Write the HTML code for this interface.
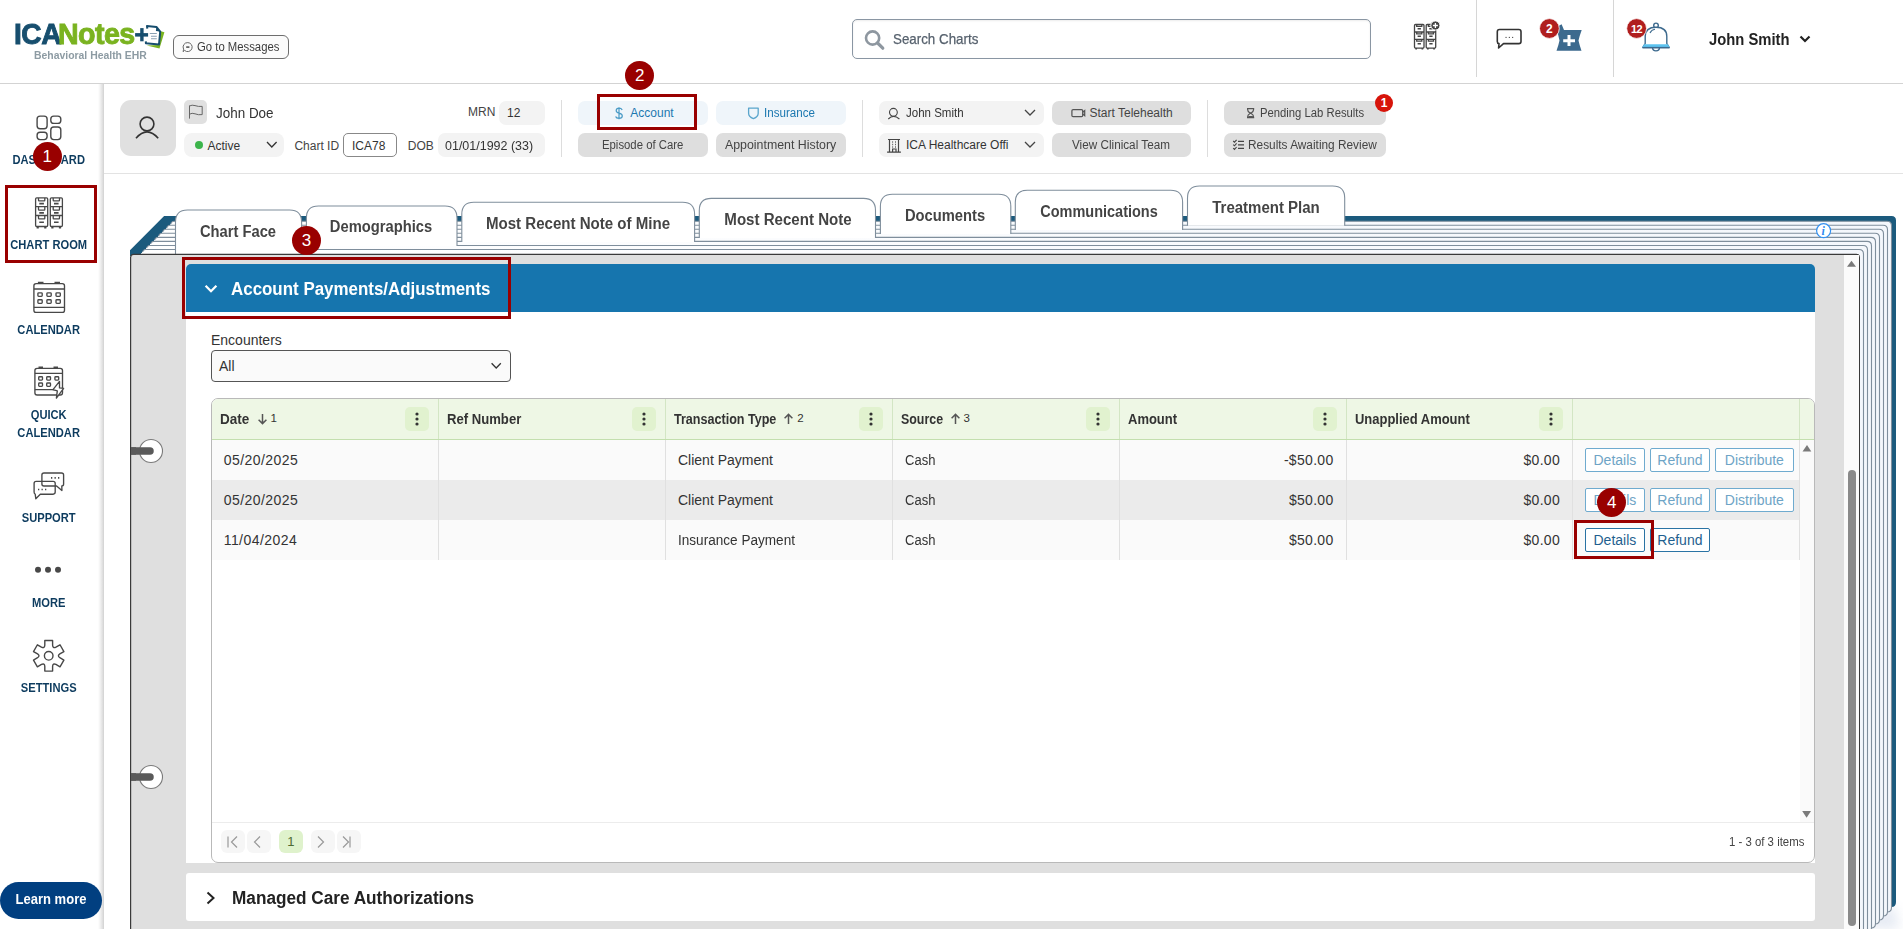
<!DOCTYPE html>
<html><head><meta charset="utf-8">
<style>
*{box-sizing:border-box}
html,body{margin:0;padding:0}
body{width:1903px;height:929px;overflow:hidden;position:relative;background:#fff;font-family:"Liberation Sans",sans-serif;color:#333}
.a{position:absolute}
.t{position:absolute;white-space:nowrap;line-height:1}
.badge{position:absolute;width:29.3px;height:29.3px;border-radius:50%;background:#990000;color:#fff;font-size:17px;text-align:center;line-height:30px}
.rbox{position:absolute;border:3px solid #990000}
.nav{position:absolute;left:0;width:97.4px;text-align:center;color:#0d3b5e;font-weight:bold;font-size:12px;line-height:18px;transform:scaleX(0.93);transform-origin:48.7px 0}
.pill{position:absolute;height:24px;border-radius:6px;font-size:12px;line-height:24px;text-align:center;color:#444;white-space:nowrap}
.tab{position:absolute;white-space:nowrap;line-height:1;font-size:16px;font-weight:bold;color:#444;text-align:center;transform:scaleX(0.92)}
.gbtn{position:absolute;height:24px;border:1px solid #5a9fc4;border-radius:2px;color:#5b9bbf;font-size:14px;line-height:22px;text-align:center;background:#fff}
</style></head>
<body>
<!-- HEADER -->
<div class="a" style="left:0;top:0;width:1903px;height:84px;border-bottom:1px solid #d3d3d3"></div>
<div class="t" style="left:13.6px;top:19.3px;font-size:29.5px;font-weight:bold;color:#174e6e;-webkit-text-stroke:0.9px #174e6e;transform:scaleX(0.955);transform-origin:0 0;letter-spacing:-0.5px">ICA</div>
<div class="t" style="left:57.9px;top:19.3px;font-size:29.5px;font-weight:bold;color:#7ab320;-webkit-text-stroke:0.9px #7ab320;transform:scaleX(0.97);transform-origin:0 0;letter-spacing:-0.6px">Notes</div>
<svg class="a" style="left:130px;top:20px" width="40" height="32">
<path d="M30,11 L34.4,12.3 L29.5,28.6 L16.7,25.4 L29,25 Z" fill="#7ab320"/>
<path d="M5.1,14.85 H18.1" stroke="#174e6e" stroke-width="3.5"/><path d="M11.9,8.1 V21.3" stroke="#174e6e" stroke-width="3.4"/>
<path d="M17.3,8.6 L17,6.1 L26.4,6.9 L30.2,11.6 L29,24.5 L15.9,23.2 L15.8,21.4" fill="none" stroke="#174e6e" stroke-width="2" stroke-linejoin="round"/>
<path d="M26.4,6.9 L25.9,10.9 L30.2,11.6 Z" fill="#174e6e"/>
<path d="M19.8,13.5 H26.8 M21,16.3 H26.8 M21,18.7 H26.8" stroke="#8aa0b3" stroke-width="1.1"/>
</svg>
<div class="t" style="left:34.4px;top:49.8px;font-size:10.6px;font-weight:bold;color:#8d9ba3;transform:scaleX(0.983);transform-origin:0 0">Behavioral Health EHR</div>
<div class="a" style="left:173px;top:35px;width:115.5px;height:24px;border:1.3px solid #6e6e6e;border-radius:6px;background:#fbfbfb"></div>
<div class="t" style="left:196.8px;top:40.8px;font-size:12px;color:#3c3c3c;transform:scaleX(0.943);transform-origin:0 0">Go to Messages</div>

<div class="a" style="left:852px;top:19px;width:519px;height:40px;border:1.5px solid #8a96a3;border-radius:5px;box-shadow:inset 0 1px 2px rgba(0,0,0,.08)"></div>
<div class="t" style="left:893px;top:31.3px;font-size:15px;color:#56616d;-webkit-text-stroke:0.25px #56616d;transform:scaleX(0.89);transform-origin:0 0">Search Charts</div>

<div class="a" style="left:1476px;top:0;width:1px;height:77px;background:#d6d6d6"></div>
<div class="a" style="left:1613px;top:0;width:1px;height:77px;background:#d6d6d6"></div>
<div class="t" style="left:1709.4px;top:31.1px;font-size:17px;font-weight:bold;color:#222;transform:scaleX(0.87);transform-origin:0 0">John Smith</div>
<svg class="a" style="left:1798px;top:33px" width="14" height="12"><path d="M2.5,3.5 L7,8 L11.5,3.5" fill="none" stroke="#222" stroke-width="2.2"/></svg>
<!-- search icon -->
<svg class="a" style="left:860px;top:26px" width="30" height="28"><circle cx="12.6" cy="12" r="6.6" fill="none" stroke="#8e97a0" stroke-width="2.6"/><path d="M17.6,17 L22.8,22.2" stroke="#8e97a0" stroke-width="3.2" stroke-linecap="round"/></svg>
<!-- go to messages icon -->
<svg class="a" style="left:181px;top:41px" width="13" height="13"><path d="M6.8,1.6 A4.5,4.5 0 1 1 3.6,9.4 L2.1,10.7 L2.6,8.2 A4.5,4.5 0 0 1 6.8,1.6 Z" fill="none" stroke="#666" stroke-width="1"/><path d="M5.2,6.1 H8.4" stroke="#555" stroke-width="1.6"/></svg>
<!-- cabinet plus icon -->
<svg class="a" style="left:1410px;top:18px" width="32" height="34" fill="none" stroke="#444" stroke-width="1.3">
<g><rect x="4.5" y="6.5" width="9.5" height="23.6" rx="1"/><path d="M4.5,14 H14 M4.5,21.3 H14"/>
<path d="M6.7,6.6 V8.3 H11.8 V6.6 M6.7,14.1 V15.8 H11.8 V14.1 M6.7,21.4 V23.1 H11.8 V21.4"/>
<path d="M7.6,10.8 H10.9 M7.6,18.2 H10.9 M7.6,25.7 H10.9" stroke-width="1.4"/>
<path d="M5.3,30.8 H7 M11.5,30.8 H13.2" stroke-width="1.6"/></g>
<g transform="translate(11.7,0)"><rect x="4.5" y="6.5" width="9.5" height="23.6" rx="1"/><path d="M4.5,14 H14 M4.5,21.3 H14"/>
<path d="M6.7,6.6 V8.3 H11.8 V6.6 M6.7,14.1 V15.8 H11.8 V14.1 M6.7,21.4 V23.1 H11.8 V21.4"/>
<path d="M7.6,10.8 H10.9 M7.6,18.2 H10.9 M7.6,25.7 H10.9" stroke-width="1.4"/>
<path d="M5.3,30.8 H7 M11.5,30.8 H13.2" stroke-width="1.6"/></g>
<circle cx="25.4" cy="7.5" r="4.6" fill="#444" stroke="#fff" stroke-width="1"/><path d="M25.4,5 V10 M22.9,7.5 H27.9" stroke="#fff" stroke-width="1.3"/></svg>
<!-- chat bubble -->
<svg class="a" style="left:1492px;top:24px" width="34" height="28"><path d="M7.5,5.5 H26.8 Q29,5.5 29,7.7 V17.4 Q29,19.6 26.8,19.6 H11.5 L6.6,24 L7,19.6 Q5.3,19.4 5.3,17.4 V7.7 Q5.3,5.5 7.5,5.5 Z" fill="none" stroke="#333" stroke-width="1.6" stroke-linejoin="round"/><path d="M13.5,13.4 H14.6 M16.8,13.4 H17.9 M20.1,13.4 H21.2" stroke="#333" stroke-width="1"/></svg>
<!-- rx mortar -->
<svg class="a" style="left:1536px;top:16px" width="54" height="40">
<path d="M22.5,10 L25.6,8.2 L28,14 L45.7,14 Q43.5,20 42.5,24.6 Q43.5,29.5 45.5,34.7 L20.5,34.7 Q22.5,29.5 23.5,24.6 Q22.5,20 21,14 Z" fill="#3d6a8e"/>
<path d="M33,19 V30 M27.2,24.7 H39" stroke="#fff" stroke-width="3"/>
<circle cx="13.4" cy="12.5" r="9.9" fill="#b01e1e" stroke="#fff" stroke-width="0.8"/>
<text x="13.4" y="16.8" text-anchor="middle" font-family="Liberation Sans" font-weight="bold" font-size="12" fill="#fff">2</text></svg>
<!-- bell -->
<svg class="a" style="left:1624px;top:16px" width="50" height="40">
<circle cx="32" cy="9.4" r="2.3" fill="none" stroke="#3d6a8e" stroke-width="1.4"/>
<path d="M21.2,27.5 V20.5 Q21.2,11.3 32,11.3 Q42.8,11.3 42.8,20.5 V27.5 L45.3,31.6 H18.7 Z" fill="#fff" stroke="#3d6a8e" stroke-width="1.4" stroke-linejoin="round"/>
<path d="M20,28.2 H44 L45.8,31.4 H18.2 Z" fill="#5cc3ef"/>
<path d="M18.7,31.6 H45.3" stroke="#3d6a8e" stroke-width="1.4"/>
<path d="M28.6,31.8 Q28.6,34.9 32,34.9 Q35.4,34.9 35.4,31.8" fill="none" stroke="#3d6a8e" stroke-width="1.4"/>
<path d="M26,17 Q27.5,13.8 31,13.3" fill="none" stroke="#3d6a8e" stroke-width="1.1"/>
<circle cx="12.6" cy="12.5" r="9.9" fill="#b01e1e" stroke="#fff" stroke-width="0.8"/>
<text x="12.6" y="16.6" text-anchor="middle" font-family="Liberation Sans" font-weight="bold" font-size="11" fill="#fff" letter-spacing="-0.6">12</text></svg>


<!-- SIDEBAR -->
<div class="a" style="left:98px;top:84px;width:6px;height:845px;background:linear-gradient(90deg,rgba(0,0,0,0),rgba(0,0,0,0.05) 35%,rgba(0,0,0,0.13) 78%,rgba(0,0,0,0.18))"></div>
<div class="nav" style="top:150.7px">DASHBOARD</div>
<div class="nav" style="top:235.7px">CHART ROOM</div>
<div class="nav" style="top:320.7px">CALENDAR</div>
<div class="nav" style="top:405.7px">QUICK<br>CALENDAR</div>
<div class="nav" style="top:508.7px">SUPPORT</div>
<div class="nav" style="top:593.7px">MORE</div>
<div class="nav" style="top:678.7px">SETTINGS</div>
<div class="a" style="left:0;top:882px;width:102px;height:37px;border-radius:19px;background:#013f80"></div><div class="t" style="left:0;top:892.2px;width:102px;text-align:center;font-size:14px;font-weight:bold;color:#fff;transform:scaleX(0.93);transform-origin:51px 0">Learn more</div>

<svg class="a" style="left:0;top:0" width="1903" height="929" viewBox="0 0 1903 929">
<defs><linearGradient id="pg" x1="0" y1="0" x2="1" y2="0"><stop offset="0" stop-color="#ffffff"/><stop offset="1" stop-color="#f4f7fc"/></linearGradient></defs>
<defs><filter id="bl" x="-50%" y="-50%" width="200%" height="200%"><feGaussianBlur stdDeviation="6"/></filter></defs>
<path d="M1830,929 L1893,905 L1900,929 Z" fill="#c9d3e6" opacity="0.45" filter="url(#bl)"/>
<path d="M130,256 L130,250.3 L164.1,216 L1891.5,216 Q1896,216 1896,220.5 L1896,902 Q1896,907 1891.5,907 L1860,907 L1860,256 Z" fill="#1b5a7d"/>
<path d="M139.1,256 L169.8,225.3 L171.5,222.5 Q172.2,221.2 174,221.2 L1887,221.2 Q1891.5,221.2 1891.5,225.7 L1891.5,907.5 Q1891.5,912 1887,912 L1811.5,912 L1811.5,256 Z" fill="url(#pg)"/>
<path d="M170.8,223.6 L171.5,222.5 Q172.2,221.2 174,221.2 L1887,221.2 Q1891.5,221.2 1891.5,225.7 L1891.5,907.5 Q1891.5,912 1887,912 L1811.5,912" fill="none" stroke="#7f8e9c" stroke-width="1.1"/>
<path d="M139.1,256 L165.76,229.34 L167.46,226.54 Q168.16,225.24 169.96,225.24 L1883,225.24 Q1887.5,225.24 1887.5,229.74 L1887.5,911.5 Q1887.5,916 1883,916 L1807.5,916 L1807.5,256 Z" fill="url(#pg)"/>
<path d="M166.76,227.64 L167.46,226.54 Q168.16,225.24 169.96,225.24 L1883,225.24 Q1887.5,225.24 1887.5,229.74 L1887.5,911.5 Q1887.5,916 1883,916 L1807.5,916" fill="none" stroke="#7f8e9c" stroke-width="1.1"/>
<path d="M1187.5,225.84 L1187.5,198 Q1187.5,186 1199.5,186 L1332.7,186 Q1344.7,186 1344.7,198 L1344.7,225.84 Z" fill="#fff"/>
<path d="M1187.5,225.84 L1187.5,198 Q1187.5,186 1199.5,186 L1332.7,186 Q1344.7,186 1344.7,198 L1344.7,225.84" fill="none" stroke="#7f8e9c" stroke-width="1.1"/>
<path d="M139.1,256 L161.72,233.38 L163.42,230.58 Q164.12,229.28 165.92,229.28 L1879,229.28 Q1883.5,229.28 1883.5,233.78 L1883.5,915.5 Q1883.5,920 1879,920 L1803.5,920 L1803.5,256 Z" fill="url(#pg)"/>
<path d="M162.72,231.68 L163.42,230.58 Q164.12,229.28 165.92,229.28 L1879,229.28 Q1883.5,229.28 1883.5,233.78 L1883.5,915.5 Q1883.5,920 1879,920 L1803.5,920" fill="none" stroke="#7f8e9c" stroke-width="1.1"/>
<path d="M1015.3,229.88 L1015.3,202.2 Q1015.3,190.2 1027.3,190.2 L1170.6,190.2 Q1182.6,190.2 1182.6,202.2 L1182.6,229.88 Z" fill="#fff"/>
<path d="M1015.3,229.88 L1015.3,202.2 Q1015.3,190.2 1027.3,190.2 L1170.6,190.2 Q1182.6,190.2 1182.6,202.2 L1182.6,229.88" fill="none" stroke="#7f8e9c" stroke-width="1.1"/>
<path d="M139.1,256 L157.68,237.42 L159.38,234.62 Q160.08,233.32 161.88,233.32 L1875,233.32 Q1879.5,233.32 1879.5,237.82 L1879.5,919.5 Q1879.5,924 1875,924 L1799.5,924 L1799.5,256 Z" fill="url(#pg)"/>
<path d="M158.68,235.72 L159.38,234.62 Q160.08,233.32 161.88,233.32 L1875,233.32 Q1879.5,233.32 1879.5,237.82 L1879.5,919.5 Q1879.5,924 1875,924 L1799.5,924" fill="none" stroke="#7f8e9c" stroke-width="1.1"/>
<path d="M880.4,233.92 L880.4,206.2 Q880.4,194.2 892.4,194.2 L998.8,194.2 Q1010.8,194.2 1010.8,206.2 L1010.8,233.92 Z" fill="#fff"/>
<path d="M880.4,233.92 L880.4,206.2 Q880.4,194.2 892.4,194.2 L998.8,194.2 Q1010.8,194.2 1010.8,206.2 L1010.8,233.92" fill="none" stroke="#7f8e9c" stroke-width="1.1"/>
<path d="M139.1,256 L153.64,241.46 L155.34,238.66 Q156.04,237.36 157.84,237.36 L1871,237.36 Q1875.5,237.36 1875.5,241.86 L1875.5,923.5 Q1875.5,928 1871,928 L1795.5,928 L1795.5,256 Z" fill="url(#pg)"/>
<path d="M154.64,239.76 L155.34,238.66 Q156.04,237.36 157.84,237.36 L1871,237.36 Q1875.5,237.36 1875.5,241.86 L1875.5,923.5 Q1875.5,928 1871,928 L1795.5,928" fill="none" stroke="#7f8e9c" stroke-width="1.1"/>
<path d="M699.3,237.96 L699.3,210.4 Q699.3,198.4 711.3,198.4 L863.5,198.4 Q875.5,198.4 875.5,210.4 L875.5,237.96 Z" fill="#fff"/>
<path d="M699.3,237.96 L699.3,210.4 Q699.3,198.4 711.3,198.4 L863.5,198.4 Q875.5,198.4 875.5,210.4 L875.5,237.96" fill="none" stroke="#7f8e9c" stroke-width="1.1"/>
<path d="M139.1,256 L149.6,245.5 L151.3,242.7 Q152,241.4 153.8,241.4 L1867,241.4 Q1871.5,241.4 1871.5,245.9 L1871.5,927.5 Q1871.5,932 1867,932 L1791.5,932 L1791.5,256 Z" fill="url(#pg)"/>
<path d="M150.6,243.8 L151.3,242.7 Q152,241.4 153.8,241.4 L1867,241.4 Q1871.5,241.4 1871.5,245.9 L1871.5,927.5 Q1871.5,932 1867,932 L1791.5,932" fill="none" stroke="#7f8e9c" stroke-width="1.1"/>
<path d="M461.8,242 L461.8,214.3 Q461.8,202.3 473.8,202.3 L682.6,202.3 Q694.6,202.3 694.6,214.3 L694.6,242 Z" fill="#fff"/>
<path d="M461.8,242 L461.8,214.3 Q461.8,202.3 473.8,202.3 L682.6,202.3 Q694.6,202.3 694.6,214.3 L694.6,242" fill="none" stroke="#7f8e9c" stroke-width="1.1"/>
<path d="M139.1,256 L145.56,249.54 L147.26,246.74 Q147.96,245.44 149.76,245.44 L1863,245.44 Q1867.5,245.44 1867.5,249.94 L1867.5,931.5 Q1867.5,936 1863,936 L1787.5,936 L1787.5,256 Z" fill="url(#pg)"/>
<path d="M146.56,247.84 L147.26,246.74 Q147.96,245.44 149.76,245.44 L1863,245.44 Q1867.5,245.44 1867.5,249.94 L1867.5,931.5 Q1867.5,936 1863,936 L1787.5,936" fill="none" stroke="#7f8e9c" stroke-width="1.1"/>
<path d="M306.4,246.04 L306.4,218 Q306.4,206 318.4,206 L445,206 Q457,206 457,218 L457,246.04 Z" fill="#fff"/>
<path d="M306.4,246.04 L306.4,218 Q306.4,206 318.4,206 L445,206 Q457,206 457,218 L457,246.04" fill="none" stroke="#7f8e9c" stroke-width="1.1"/>
<path d="M139.1,256 L141.52,253.58 L143.22,250.78 Q143.92,249.48 145.72,249.48 L1859,249.48 Q1863.5,249.48 1863.5,253.98 L1863.5,935.5 Q1863.5,940 1859,940 L1783.5,940 L1783.5,256 Z" fill="url(#pg)"/>
<path d="M142.52,251.88 L143.22,250.78 Q143.92,249.48 145.72,249.48 L1859,249.48 Q1863.5,249.48 1863.5,253.98 L1863.5,935.5 Q1863.5,940 1859,940 L1783.5,940" fill="none" stroke="#7f8e9c" stroke-width="1.1"/>
<path d="M175.5,255 L175.5,222 Q175.5,210 187.5,210 L289.6,210 Q301.6,210 301.6,222 L301.6,255 Z" fill="#fff"/>
<path d="M175.5,255 L175.5,222 Q175.5,210 187.5,210 L289.6,210 Q301.6,210 301.6,222 L301.6,255" fill="none" stroke="#7f8e9c" stroke-width="1.1"/>
<path d="M130.6,929.5 L130.6,257.4 Q130.6,254.4 133.6,254.4 L1856.4,254.4 Q1859.4,254.4 1859.4,257.4 L1859.4,929.5" fill="#dfdfdf" stroke="#3a3a3a" stroke-width="1.2"/>
</svg>
<!-- PATIENT HEADER -->
<div class="a" style="left:104px;top:173px;width:1799px;height:1px;background:#e3e3e3"></div>
<div class="a" style="left:120px;top:100px;width:56px;height:56px;border-radius:11px;background:#e0e0e0"></div>
<div class="a" style="left:184px;top:100px;width:23px;height:24px;border-radius:5px;background:#e0e0e0"></div>
<div class="t" style="left:215.5px;top:106.3px;font-size:14px;color:#333;transform:scaleX(0.96);transform-origin:0 0">John Doe</div>
<div class="a" style="left:184px;top:133px;width:100px;height:24px;border-radius:8px;background:#f3f3f3"></div>
<div class="a" style="left:195px;top:141px;width:8px;height:8px;border-radius:50%;background:#3cb44b"></div>
<div class="t" style="left:207.5px;top:139.6px;font-size:12px;color:#333">Active</div>
<div class="t" style="left:294.4px;top:139.6px;font-size:12px;color:#444">Chart ID</div>
<div class="a" style="left:343px;top:133px;width:54px;height:24px;border-radius:5px;border:1px solid #888;background:#fff"></div>
<div class="t" style="left:352px;top:139.6px;font-size:12px;color:#333">ICA78</div>
<div class="t" style="left:407.8px;top:139.6px;font-size:12px;color:#444">DOB</div>
<div class="a" style="left:438px;top:133px;width:107px;height:24px;border-radius:7px;background:#f3f3f3"></div>
<div class="t" style="left:444.7px;top:139.6px;font-size:12px;color:#333;transform:scaleX(1.04);transform-origin:0 0">01/01/1992 (33)</div>
<div class="t" style="left:468px;top:106px;font-size:12px;color:#444">MRN</div>
<div class="a" style="left:499px;top:101px;width:46px;height:24px;border-radius:7px;background:#f3f3f3"></div>
<div class="t" style="left:507px;top:107px;font-size:12px;color:#333">12</div>

<div class="a" style="left:561px;top:100px;width:1px;height:57px;background:#ddd"></div>
<div class="a" style="left:862px;top:100px;width:1px;height:57px;background:#ddd"></div>
<div class="a" style="left:1207px;top:100px;width:1px;height:57px;background:#ddd"></div>

<div class="a" style="left:578px;top:101px;width:130px;height:24px;border-radius:7px;background:#eff5fa"></div>
<div class="a" style="left:716px;top:101px;width:130px;height:24px;border-radius:7px;background:#eff5fa"></div>
<div class="a" style="left:578px;top:133px;width:130px;height:24px;border-radius:7px;background:#dedede"></div>
<div class="a" style="left:716px;top:133px;width:130px;height:24px;border-radius:7px;background:#dedede"></div>
<div class="a" style="left:879px;top:101px;width:165px;height:24px;border-radius:7px;background:#f3f3f3"></div>
<div class="a" style="left:879px;top:133px;width:165px;height:24px;border-radius:7px;background:#f3f3f3"></div>
<div class="a" style="left:1052px;top:101px;width:139px;height:24px;border-radius:7px;background:#dedede"></div>
<div class="a" style="left:1052px;top:133px;width:139px;height:24px;border-radius:7px;background:#dedede"></div>
<div class="a" style="left:1224px;top:101px;width:162px;height:24px;border-radius:7px;background:#dedede"></div>
<div class="a" style="left:1224px;top:133px;width:162px;height:24px;border-radius:7px;background:#dedede"></div>
<div class="t" style="left:630.3px;top:107.1px;font-size:12px;color:#1c78b0">Account</div>
<div class="t" style="left:764.4px;top:107.1px;font-size:12px;color:#1c78b0;transform:scaleX(0.967);transform-origin:0 0">Insurance</div>
<div class="t" style="left:601.9px;top:139.1px;font-size:12px;color:#444;transform:scaleX(0.945);transform-origin:0 0">Episode of Care</div>
<div class="t" style="left:725.2px;top:139.1px;font-size:12px;color:#444;transform:scaleX(1.03);transform-origin:0 0">Appointment History</div>
<div class="t" style="left:906px;top:107.1px;font-size:12px;color:#333;transform:scaleX(0.96);transform-origin:0 0">John Smith</div>
<div class="t" style="left:906px;top:139.1px;font-size:12px;color:#333">ICA Healthcare Offi</div>
<div class="t" style="left:1089.5px;top:107.1px;font-size:12px;color:#444">Start Telehealth</div>
<div class="t" style="left:1072px;top:139.1px;font-size:12px;color:#444;transform:scaleX(0.977);transform-origin:0 0">View Clinical Team</div>
<div class="t" style="left:1260.2px;top:107.1px;font-size:12px;color:#444;transform:scaleX(0.94);transform-origin:0 0">Pending Lab Results</div>
<div class="t" style="left:1247.8px;top:139.1px;font-size:12px;color:#444;transform:scaleX(0.987);transform-origin:0 0">Results Awaiting Review</div>

<svg class="a" style="left:612px;top:105px" width="14" height="16"><path d="M10.2,5 Q9.3,3.2 7,3.2 Q4.2,3.2 4.2,5.6 Q4.2,7.6 7,8.2 Q10.3,8.9 10.3,11 Q10.3,13.3 7,13.3 Q4.2,13.3 3.6,11.5 M7,2.3 V14.2" fill="none" stroke="#4a9bc6" stroke-width="1.2"/></svg>
<svg class="a" style="left:746px;top:105px" width="15" height="16"><path d="M2.6,3.1 H12.2 V8.2 Q12.2,11.8 7.4,13.6 Q2.6,11.8 2.6,8.2 Z" fill="none" stroke="#5aa5cc" stroke-width="1.3" stroke-linejoin="round"/></svg>
<svg class="a" style="left:885px;top:105px" width="18" height="18" fill="none" stroke="#444" stroke-width="1.1"><circle cx="8.4" cy="7.3" r="3.9"/><path d="M3.3,14 Q8.4,8.8 14.4,14"/></svg>
<svg class="a" style="left:885px;top:137px" width="18" height="18" fill="none" stroke="#444" stroke-width="1.2"><path d="M3,2.5 H15 M4.5,2.5 V15.2 M13.5,2.5 V15.2 M2.1,15.2 H15.9 M7.6,15.2 V12 H11 V15.2"/><path d="M7.3,5 H8.1 M10,5 H10.8 M7.3,7.5 H8.1 M10,7.5 H10.8 M7.3,10 H8.1 M10,10 H10.8" stroke-width="1.4"/></svg>
<svg class="a" style="left:1022px;top:107px" width="16" height="12"><path d="M3,3 L8,8 L13,3" fill="none" stroke="#444" stroke-width="1.3"/></svg>
<svg class="a" style="left:1022px;top:139px" width="16" height="12"><path d="M3,3 L8,8 L13,3" fill="none" stroke="#444" stroke-width="1.3"/></svg>
<svg class="a" style="left:264px;top:139px" width="16" height="12"><path d="M3,3 L7.8,8 L12.6,3" fill="none" stroke="#333" stroke-width="1.3"/></svg>
<svg class="a" style="left:1069px;top:106px" width="19" height="14" fill="none" stroke="#555" stroke-width="1.25"><rect x="2.9" y="3.6" width="10.8" height="7" rx="1.2"/><path d="M13.7,6.3 L15.7,4.6 V9.7 L13.7,8"/></svg>
<svg class="a" style="left:1244px;top:106px" width="12" height="14" fill="none" stroke="#555" stroke-width="1.2"><path d="M3.6,2.6 H9.6 V3.4 Q9.6,5.4 7.2,6.9 L6.6,7.2 L6,6.9 Q3.6,5.4 3.6,3.4 Z M6.6,7.2 L7.2,7.6 Q9.6,9 9.6,11 V11.6 H3.6 V11 Q3.6,9 6,7.6 Z"/><path d="M4.3,10.8 H8.9" stroke-width="1.6"/></svg>
<svg class="a" style="left:1230px;top:137px" width="16" height="16" fill="none" stroke="#444" stroke-width="1.1"><path d="M3.2,4 L4.5,5.2 L6.6,2.8 M3.2,7.6 L4.5,8.8 L6.6,6.4 M3.2,11.2 L4.5,12.4 L6.6,10"/><path d="M8,4.3 H14 M8,7.9 H14 M8,11.4 H14" stroke-width="1.3"/></svg>
<svg class="a" style="left:1374px;top:93px" width="20" height="20"><circle cx="10" cy="10" r="9" fill="#d7140a"/><text x="10" y="14.2" text-anchor="middle" font-family="Liberation Sans" font-weight="bold" font-size="12" fill="#fff">1</text></svg>
<svg class="a" style="left:120px;top:100px" width="56" height="56" fill="none" stroke="#333" stroke-width="1.6"><circle cx="27" cy="24" r="6.9"/><path d="M16,38.2 Q27,25.5 38.2,38.2"/></svg>
<svg class="a" style="left:184px;top:100px" width="23" height="24" fill="none" stroke="#666" stroke-width="1"><path d="M5.5,5.5 V18.6"/><path d="M5.5,6 Q8,4.6 11,5.6 Q14.3,6.8 18.2,6.4 V14.6 Q14.3,15.2 11,13.8 Q8,12.6 5.5,14.2"/></svg>



<!-- TAB TEXT -->
<div class="tab" style="left:88.25px;top:223.8px;width:300px">Chart Face</div>
<div class="tab" style="left:231.15px;top:219.3px;width:300px">Demographics</div>
<div class="tab" style="left:427.70px;top:215.9px;width:300px;transform:scaleX(0.942)">Most Recent Note of Mine</div>
<div class="tab" style="left:637.65px;top:212.0px;width:300px;transform:scaleX(0.942)">Most Recent Note</div>
<div class="tab" style="left:795.35px;top:208.0px;width:300px">Documents</div>
<div class="tab" style="left:948.70px;top:204.1px;width:300px;transform:scaleX(0.905)">Communications</div>
<div class="tab" style="left:1115.70px;top:199.9px;width:300px;transform:scaleX(0.938)">Treatment Plan</div>

<!-- CONTENT -->
<div class="a" style="left:186px;top:263.8px;width:1629px;height:48px;background:#1675ae;border-radius:5px 5px 0 0"></div>
<div class="t" style="left:231px;top:279.9px;font-size:18px;font-weight:bold;color:#fff;transform:scaleX(0.94);transform-origin:0 0">Account Payments/Adjustments</div>
<div class="a" style="left:186px;top:311.6px;width:1629px;height:551.6px;background:#fff"></div>
<div class="t" style="left:211px;top:333.4px;font-size:14px;color:#333">Encounters</div>
<div class="a" style="left:211.4px;top:350.2px;width:299.6px;height:31.6px;border:1px solid #555;border-radius:4px;background:#fafafa"></div>
<div class="t" style="left:219px;top:359px;font-size:14px;color:#333">All</div>

<!-- GRID -->
<div class="a" style="left:211.4px;top:398.3px;width:1603.6px;height:464.5px;border:1px solid #b9b9b9;border-radius:7px;background:#fff"></div>
<div class="a" style="left:212.4px;top:399.3px;width:1601.6px;height:40.7px;background:#eef7e5;border-bottom:1px solid #c3dfae;border-radius:6px 6px 0 0"></div>
<div class="a" style="left:437.5px;top:399.3px;width:1px;height:40px;background:#d3e6c4"></div>
<div class="a" style="left:664.7px;top:399.3px;width:1px;height:40px;background:#d3e6c4"></div>
<div class="a" style="left:891.7px;top:399.3px;width:1px;height:40px;background:#d3e6c4"></div>
<div class="a" style="left:1118.5px;top:399.3px;width:1px;height:40px;background:#d3e6c4"></div>
<div class="a" style="left:1345.5px;top:399.3px;width:1px;height:40px;background:#d3e6c4"></div>
<div class="a" style="left:1571.7px;top:399.3px;width:1px;height:40px;background:#d3e6c4"></div>
<div class="a" style="left:1798.5px;top:399.3px;width:1px;height:40px;background:#d3e6c4"></div>
<div class="a" style="left:212.4px;top:439.8px;width:1586.6px;height:40px;background:#fafafa"></div>
<div class="a" style="left:212.4px;top:479.8px;width:1586.6px;height:40px;background:#ebebeb"></div>
<div class="a" style="left:212.4px;top:519.8px;width:1586.6px;height:40px;background:#fafafa"></div>
<div class="a" style="left:437.5px;top:440px;width:1px;height:120px;background:#e0e0e0"></div>
<div class="a" style="left:664.7px;top:440px;width:1px;height:120px;background:#e0e0e0"></div>
<div class="a" style="left:891.7px;top:440px;width:1px;height:120px;background:#e0e0e0"></div>
<div class="a" style="left:1118.5px;top:440px;width:1px;height:120px;background:#e0e0e0"></div>
<div class="a" style="left:1345.5px;top:440px;width:1px;height:120px;background:#e0e0e0"></div>
<div class="a" style="left:1571.7px;top:440px;width:1px;height:120px;background:#e0e0e0"></div>
<div class="a" style="left:1798.5px;top:440px;width:1px;height:120px;background:#e0e0e0"></div>
<div class="a" style="left:1799.5px;top:440px;width:14.5px;height:382px;background:#fafafa"></div>
<svg class="a" style="left:1800px;top:443px" width="14" height="10"><path d="M2.5,8.6 L7,2 L11.3,8.6 Z" fill="#7a7a7a"/></svg>
<svg class="a" style="left:1800px;top:809px" width="14" height="10"><path d="M2.2,2 L11,2 L6.6,8.7 Z" fill="#7a7a7a"/></svg>
<div class="a" style="left:212.4px;top:822px;width:1601.6px;height:1px;background:#ececec"></div>
<div class="t" style="left:220px;top:412.4px;font-size:14px;font-weight:bold;color:#333;transform:scaleX(0.964);transform-origin:0 0">Date</div>
<div class="t" style="left:447px;top:412.4px;font-size:14px;font-weight:bold;color:#333;transform:scaleX(0.936);transform-origin:0 0">Ref Number</div>
<div class="t" style="left:674.2px;top:412.4px;font-size:14px;font-weight:bold;color:#333;transform:scaleX(0.897);transform-origin:0 0">Transaction Type</div>
<div class="t" style="left:900.6px;top:412.4px;font-size:14px;font-weight:bold;color:#333;transform:scaleX(0.886);transform-origin:0 0">Source</div>
<div class="t" style="left:1127.5px;top:412.4px;font-size:14px;font-weight:bold;color:#333;transform:scaleX(0.928);transform-origin:0 0">Amount</div>
<div class="t" style="left:1354.5px;top:412.4px;font-size:14px;font-weight:bold;color:#333;transform:scaleX(0.926);transform-origin:0 0">Unapplied Amount</div>
<svg class="a" style="left:257.5px;top:413px" width="10" height="13"><path d="M4.5,1 L4.5,10.6 M0.6,6.8 L4.5,10.6 L8.4,6.8" fill="none" stroke="#555" stroke-width="1.5"/></svg>
<div class="t" style="left:270.4px;top:413.2px;font-size:11.5px;color:#333">1</div>
<svg class="a" style="left:784.4px;top:413px" width="10" height="13"><path d="M4.5,11 L4.5,1.4 M0.6,5.2 L4.5,1.4 L8.4,5.2" fill="none" stroke="#555" stroke-width="1.5"/></svg>
<div class="t" style="left:797.3px;top:413.2px;font-size:11.5px;color:#333">2</div>
<svg class="a" style="left:950.5px;top:413px" width="10" height="13"><path d="M4.5,11 L4.5,1.4 M0.6,5.2 L4.5,1.4 L8.4,5.2" fill="none" stroke="#555" stroke-width="1.5"/></svg>
<div class="t" style="left:963.4px;top:413.2px;font-size:11.5px;color:#333">3</div>
<div class="a" style="left:405.0px;top:407.4px;width:23.6px;height:23.3px;border-radius:5px;background:#e1f2cf"></div>
<svg class="a" style="left:413.8px;top:410px" width="6" height="18"><circle cx="3" cy="4" r="1.6" fill="#333"/><circle cx="3" cy="9" r="1.6" fill="#333"/><circle cx="3" cy="14" r="1.6" fill="#333"/></svg>
<div class="a" style="left:632.2px;top:407.4px;width:23.6px;height:23.3px;border-radius:5px;background:#e1f2cf"></div>
<svg class="a" style="left:641.0px;top:410px" width="6" height="18"><circle cx="3" cy="4" r="1.6" fill="#333"/><circle cx="3" cy="9" r="1.6" fill="#333"/><circle cx="3" cy="14" r="1.6" fill="#333"/></svg>
<div class="a" style="left:859.2px;top:407.4px;width:23.6px;height:23.3px;border-radius:5px;background:#e1f2cf"></div>
<svg class="a" style="left:868.0px;top:410px" width="6" height="18"><circle cx="3" cy="4" r="1.6" fill="#333"/><circle cx="3" cy="9" r="1.6" fill="#333"/><circle cx="3" cy="14" r="1.6" fill="#333"/></svg>
<div class="a" style="left:1086.0px;top:407.4px;width:23.6px;height:23.3px;border-radius:5px;background:#e1f2cf"></div>
<svg class="a" style="left:1094.8px;top:410px" width="6" height="18"><circle cx="3" cy="4" r="1.6" fill="#333"/><circle cx="3" cy="9" r="1.6" fill="#333"/><circle cx="3" cy="14" r="1.6" fill="#333"/></svg>
<div class="a" style="left:1313.0px;top:407.4px;width:23.6px;height:23.3px;border-radius:5px;background:#e1f2cf"></div>
<svg class="a" style="left:1321.8px;top:410px" width="6" height="18"><circle cx="3" cy="4" r="1.6" fill="#333"/><circle cx="3" cy="9" r="1.6" fill="#333"/><circle cx="3" cy="14" r="1.6" fill="#333"/></svg>
<div class="a" style="left:1539.2px;top:407.4px;width:23.6px;height:23.3px;border-radius:5px;background:#e1f2cf"></div>
<svg class="a" style="left:1548.0px;top:410px" width="6" height="18"><circle cx="3" cy="4" r="1.6" fill="#333"/><circle cx="3" cy="9" r="1.6" fill="#333"/><circle cx="3" cy="14" r="1.6" fill="#333"/></svg>
<div class="t" style="left:223.7px;top:452.7px;font-size:14px;color:#333;letter-spacing:0.45px">05/20/2025</div>
<div class="t" style="left:678px;top:452.7px;font-size:14px;color:#333">Client Payment</div>
<div class="t" style="left:905px;top:452.7px;font-size:14px;color:#333;transform:scaleX(0.93);transform-origin:0 0">Cash</div>
<div class="t" style="right:569.5px;top:452.7px;font-size:14px;color:#333;letter-spacing:0.3px">-$50.00</div>
<div class="t" style="right:343px;top:452.7px;font-size:14px;color:#333;letter-spacing:0.3px">$0.00</div>
<div class="gbtn" style="left:1585px;top:448.3px;width:59.8px;height:23.4px;border-color:#6fabcf;color:#6ea4c6">Details</div>
<div class="gbtn" style="left:1650px;top:448.3px;width:59.8px;height:23.4px;border-color:#6fabcf;color:#6ea4c6">Refund</div>
<div class="gbtn" style="left:1715px;top:448.3px;width:78.7px;height:23.4px;border-color:#6fabcf;color:#6ea4c6">Distribute</div>
<div class="t" style="left:223.7px;top:492.7px;font-size:14px;color:#333;letter-spacing:0.45px">05/20/2025</div>
<div class="t" style="left:678px;top:492.7px;font-size:14px;color:#333">Client Payment</div>
<div class="t" style="left:905px;top:492.7px;font-size:14px;color:#333;transform:scaleX(0.93);transform-origin:0 0">Cash</div>
<div class="t" style="right:569.5px;top:492.7px;font-size:14px;color:#333;letter-spacing:0.3px">$50.00</div>
<div class="t" style="right:343px;top:492.7px;font-size:14px;color:#333;letter-spacing:0.3px">$0.00</div>
<div class="gbtn" style="left:1585px;top:488.3px;width:59.8px;height:23.4px;border-color:#6fabcf;color:#6ea4c6">Details</div>
<div class="gbtn" style="left:1650px;top:488.3px;width:59.8px;height:23.4px;border-color:#6fabcf;color:#6ea4c6">Refund</div>
<div class="gbtn" style="left:1715px;top:488.3px;width:78.7px;height:23.4px;border-color:#6fabcf;color:#6ea4c6">Distribute</div>
<div class="t" style="left:223.7px;top:532.7px;font-size:14px;color:#333;letter-spacing:0.45px">11/04/2024</div>
<div class="t" style="left:678px;top:532.7px;font-size:14px;color:#333;transform:scaleX(0.97);transform-origin:0 0">Insurance Payment</div>
<div class="t" style="left:905px;top:532.7px;font-size:14px;color:#333;transform:scaleX(0.93);transform-origin:0 0">Cash</div>
<div class="t" style="right:569.5px;top:532.7px;font-size:14px;color:#333;letter-spacing:0.3px">$50.00</div>
<div class="t" style="right:343px;top:532.7px;font-size:14px;color:#333;letter-spacing:0.3px">$0.00</div>
<div class="gbtn" style="left:1585px;top:528.3px;width:59.8px;height:23.4px;border-color:#2a73a4;color:#1f5f8f">Details</div>
<div class="gbtn" style="left:1650px;top:528.3px;width:59.8px;height:23.4px;border-color:#2a73a4;color:#1f5f8f">Refund</div>
<div class="a" style="left:221px;top:829.9px;width:23.6px;height:23.6px;border-radius:6px;background:#f6f6f6"></div>
<div class="a" style="left:247px;top:829.9px;width:23.6px;height:23.6px;border-radius:6px;background:#f6f6f6"></div>
<div class="a" style="left:279px;top:829.9px;width:23.6px;height:23.6px;border-radius:6px;background:#dff2cc"></div>
<div class="a" style="left:311.3px;top:829.9px;width:23.6px;height:23.6px;border-radius:6px;background:#f6f6f6"></div>
<div class="a" style="left:337px;top:829.9px;width:23.6px;height:23.6px;border-radius:6px;background:#f6f6f6"></div>
<svg class="a" style="left:221px;top:829.9px" width="140" height="24"><path d="M7,6.5 L7,17.5 M16,6.5 L10.5,12 L16,17.5" fill="none" stroke="#999" stroke-width="1.2"/><path d="M39,6.5 L33.5,12 L39,17.5" fill="none" stroke="#999" stroke-width="1.2"/><path d="M97,6.5 L102.5,12 L97,17.5" fill="none" stroke="#999" stroke-width="1.2"/><path d="M122,6.5 L127.5,12 L122,17.5 M129,6.5 L129,17.5" fill="none" stroke="#999" stroke-width="1.2"/></svg>
<div class="t" style="left:279px;top:835px;width:23.6px;text-align:center;font-size:13px;color:#4d6b33">1</div>
<div class="t" style="right:98.2px;top:836.3px;font-size:12px;color:#444;transform:scaleX(0.95);transform-origin:100% 0">1 - 3 of 3 items</div>
<div class="a" style="left:186px;top:873px;width:1629px;height:48px;background:#fff;border-radius:3px"></div>
<svg class="a" style="left:204px;top:890px" width="14" height="16"><path d="M3.5,2.5 L9.5,8 L3.5,13.5" fill="none" stroke="#222" stroke-width="2"/></svg>
<div class="t" style="left:232px;top:889.4px;font-size:18px;font-weight:bold;color:#222;transform:scaleX(0.955);transform-origin:0 0">Managed Care Authorizations</div>
<div class="a" style="left:1844px;top:255px;width:14.8px;height:674px;background:#fbfbfb"></div>
<svg class="a" style="left:1844px;top:258px" width="15" height="10"><path d="M3,8.7 L7.5,2.8 L12,8.7 Z" fill="#7a7a7a"/></svg>
<div class="a" style="left:1847.5px;top:470.4px;width:8.6px;height:455.2px;border-radius:4.3px;background:#8a8a8a"></div>
<svg class="a" style="left:131px;top:436.8px" width="40" height="28"><circle cx="20" cy="14" r="11.5" fill="#fff" stroke="#7a7a7a" stroke-width="1.1"/><path d="M0,14 L19,14" stroke="#5a5a5a" stroke-width="7.5" stroke-linecap="round"/><rect x="0" y="10.25" width="5" height="7.5" fill="#5a5a5a"/></svg>
<svg class="a" style="left:131px;top:762.8px" width="40" height="28"><circle cx="20" cy="14" r="11.5" fill="#fff" stroke="#7a7a7a" stroke-width="1.1"/><path d="M0,14 L19,14" stroke="#5a5a5a" stroke-width="7.5" stroke-linecap="round"/><rect x="0" y="10.25" width="5" height="7.5" fill="#5a5a5a"/></svg>




<svg class="a" style="left:202px;top:281px" width="18" height="16"><path d="M3.6,4.8 L9,10.2 L14.4,4.8" fill="none" stroke="#fff" stroke-width="2.3"/></svg>
<svg class="a" style="left:488px;top:359px" width="16" height="14"><path d="M3.6,4.3 L8.2,9 L12.8,4.3" fill="none" stroke="#333" stroke-width="1.3"/></svg>
<svg class="a" style="left:1814px;top:222px" width="20" height="18"><circle cx="9.6" cy="8.7" r="7" fill="#fff" stroke="#3390f0" stroke-width="1.2"/><text x="9.2" y="12.8" text-anchor="middle" font-family="Liberation Serif" font-style="italic" font-weight="bold" font-size="12" fill="#2f8af0">i</text></svg>

<!-- SIDEBAR ICONS -->
<svg class="a" style="left:30px;top:108px" width="40" height="37" fill="none" stroke="#484848" stroke-width="1.4">
<rect x="7.1" y="8.1" width="10" height="12.7" rx="3"/><rect x="20.8" y="8.1" width="10" height="7.3" rx="3"/>
<rect x="7.1" y="24.2" width="10" height="7.4" rx="3"/><rect x="20.8" y="19" width="10" height="12.6" rx="3"/></svg>
<svg class="a" style="left:30px;top:192px" width="40" height="40" fill="none" stroke="#484848" stroke-width="1.3">
<g><rect x="5.6" y="5.8" width="12.1" height="28.7" rx="1.2"/><path d="M5.6,14.7 H17.7 M5.6,23.5 H17.7"/>
<path d="M8.5,6 V8.2 Q8.5,8.8 9.1,8.8 H14.2 Q14.8,8.8 14.8,8.2 V6 M8.5,14.9 V17.5 Q8.5,18.1 9.1,18.1 H14.2 Q14.8,18.1 14.8,17.5 V14.9 M8.5,23.7 V26.3 Q8.5,26.9 9.1,26.9 H14.2 Q14.8,26.9 14.8,26.3 V23.7"/>
<path d="M9.3,11.6 H13.9 M9.3,20.9 H13.9 M9.3,30.2 H13.9" stroke-width="1.6"/>
<path d="M6.6,35.6 H8.8 M14.2,35.6 H16.4" stroke-width="1.8"/></g>
<g transform="translate(14.7,0)"><rect x="5.6" y="5.8" width="12.1" height="28.7" rx="1.2"/><path d="M5.6,14.7 H17.7 M5.6,23.5 H17.7"/>
<path d="M8.5,6 V8.2 Q8.5,8.8 9.1,8.8 H14.2 Q14.8,8.8 14.8,8.2 V6 M8.5,14.9 V17.5 Q8.5,18.1 9.1,18.1 H14.2 Q14.8,18.1 14.8,17.5 V14.9 M8.5,23.7 V26.3 Q8.5,26.9 9.1,26.9 H14.2 Q14.8,26.9 14.8,26.3 V23.7"/>
<path d="M9.3,11.6 H13.9 M9.3,20.9 H13.9 M9.3,30.2 H13.9" stroke-width="1.6"/>
<path d="M6.6,35.6 H8.8 M14.2,35.6 H16.4" stroke-width="1.8"/></g></svg>
<svg class="a" style="left:28px;top:278px" width="42" height="40" fill="none" stroke="#484848" stroke-width="1.35">
<rect x="5.9" y="5.6" width="30.6" height="28.8" rx="2.2"/><path d="M5.9,11 H36.5 M5.9,29.3 H36.5"/>
<path d="M9.9,4.5 H15.5 M26.5,4.5 H32" stroke-width="1.6"/>
<rect x="9.9" y="14.8" width="4.3" height="3.6" rx="0.8"/><rect x="18.9" y="14.8" width="4.3" height="3.6" rx="0.8"/><rect x="28" y="14.8" width="4.3" height="3.6" rx="0.8"/>
<rect x="9.9" y="21.7" width="4.3" height="3.6" rx="0.8"/><rect x="18.9" y="21.7" width="4.3" height="3.6" rx="0.8"/><rect x="28" y="21.7" width="4.3" height="3.6" rx="0.8"/></svg>
<svg class="a" style="left:28px;top:362px" width="42" height="40" fill="none" stroke="#484848" stroke-width="1.35">
<rect x="6.9" y="6.3" width="27.6" height="26.7" rx="2.2"/><path d="M6.9,11.3 H34.5 M6.9,27.6 H34.5"/>
<path d="M10.5,5.4 H15 M25.5,5.4 H30" stroke-width="1.6"/>
<rect x="10.7" y="14.7" width="3.8" height="3.4" rx="0.8"/><rect x="18.7" y="14.7" width="3.8" height="3.4" rx="0.8"/><rect x="26.9" y="14.7" width="3.8" height="3.4" rx="0.8"/>
<rect x="10.7" y="21" width="3.8" height="3.4" rx="0.8"/><rect x="18.7" y="21" width="3.8" height="3.4" rx="0.8"/>
<path d="M31.5,19.4 L25,27.6 L29.3,28.9 L28.4,36.2 L35.6,26.3 L31.5,25.9 Z" fill="#fff" stroke-linejoin="round"/></svg>
<svg class="a" style="left:28px;top:466px" width="42" height="38" fill="none" stroke="#484848" stroke-width="1.35" stroke-linejoin="round">
<path d="M16,7 H33.5 Q35.6,7 35.6,9.1 V18 Q35.6,20 33.8,20 L33.9,24.5 L28.6,20 H16 Q13.9,20 13.9,18 V9.1 Q13.9,7 16,7 Z"/>
<path d="M8.2,15.3 H25.1 Q27.2,15.3 27.2,17.4 V26.1 Q27.2,28.2 25.1,28.2 H12.3 L7.8,32.7 L7.2,28.2 Q6.1,27.9 6.1,26.1 V17.4 Q6.1,15.3 8.2,15.3 Z"/>
<path d="M23,11.9 H24.3 M26.5,11.9 H27.8 M30,11.9 H31.3 M10,23.5 H11.3 M13.5,23.5 H14.8 M17,23.5 H18.3" stroke-width="1.6"/></svg>
<svg class="a" style="left:30px;top:564px" width="36" height="12" fill="#484848"><circle cx="8" cy="5.8" r="3"/><circle cx="18" cy="5.8" r="3"/><circle cx="28" cy="5.8" r="3"/></svg>
<svg class="a" style="left:28px;top:636px" width="42" height="40" fill="none" stroke="#484848" stroke-width="1.4" stroke-linejoin="round">
<path d="M16.80,9.20 L16.80,4.50 L24.60,4.50 L24.60,9.20 Q24.85,12.61 27.93,11.12 L27.93,11.12 L32.00,8.77 L35.90,15.53 L31.83,17.88 Q29.00,19.80 31.83,21.72 L31.83,21.72 L35.90,24.07 L32.00,30.83 L27.93,28.48 Q24.85,26.99 24.60,30.40 L24.60,30.40 L24.60,35.10 L16.80,35.10 L16.80,30.40 Q16.55,26.99 13.47,28.48 L13.47,28.48 L9.40,30.83 L5.50,24.07 L9.57,21.72 Q12.40,19.80 9.57,17.88 L9.57,17.88 L5.50,15.53 L9.40,8.77 L13.47,11.12 Q16.55,12.61 16.80,9.20 Z"/><circle cx="20.7" cy="19.8" r="4.3"/></svg>

<!-- ANNOTATIONS -->
<div class="rbox" style="left:5px;top:185px;width:92px;height:78px"></div>
<div class="rbox" style="left:597px;top:94px;width:100px;height:36px"></div>
<div class="rbox" style="left:182.4px;top:257.4px;width:328.3px;height:62.1px"></div>
<div class="rbox" style="left:1574px;top:520px;width:80px;height:38.6px"></div>
<div class="badge" style="left:32.5px;top:142.2px">1</div>
<div class="badge" style="left:625px;top:60.8px">2</div>
<div class="badge" style="left:291.8px;top:226px">3</div>
<div class="badge" style="left:1597px;top:488px">4</div>
</body></html>
